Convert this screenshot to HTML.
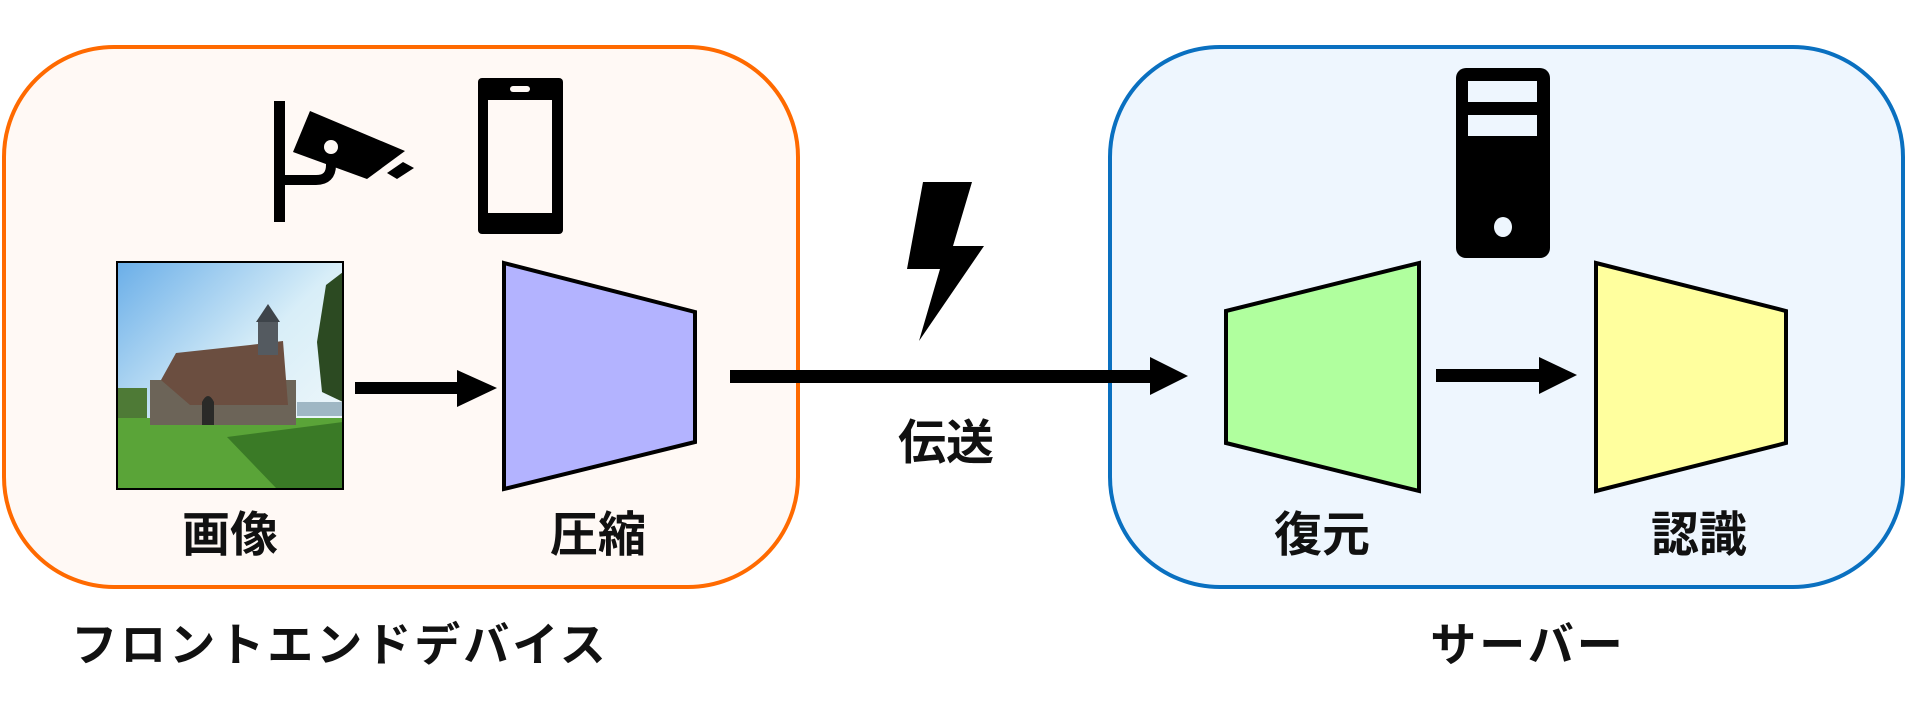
<!DOCTYPE html>
<html><head><meta charset="utf-8"><style>
html,body{margin:0;padding:0;background:#fff;}
body{width:1908px;height:710px;position:relative;overflow:hidden;font-family:"Liberation Sans","Noto Sans CJK JP",sans-serif;}
.t{position:absolute;font-weight:bold;color:#111;white-space:nowrap;transform:translate(-50%,-50%);line-height:1;}
</style></head><body>
<svg width="1908" height="710" style="position:absolute;left:0;top:0">
<rect x="4" y="47" width="794" height="540" rx="110" fill="#fff9f5" stroke="#ff6a00" stroke-width="4"/>
<rect x="1110" y="47" width="793" height="540" rx="110" fill="#eef6fe" stroke="#0a70c0" stroke-width="4"/>
<!-- camera -->
<rect x="274" y="101" width="11" height="121" fill="#000"/>
<path d="M285 180 H316 Q331 180 331 165 V150" fill="none" stroke="#000" stroke-width="10"/>
<polygon points="310,111 405,151 367,179 293,152" fill="#000"/>
<circle cx="331" cy="147" r="7" fill="#fff9f5"/>
<polygon points="387,173 403,162 414,168 397,179" fill="#000"/>
<!-- phone -->
<rect x="478" y="78" width="85" height="156" rx="4" fill="#000"/>
<rect x="488" y="100" width="64" height="113" fill="#fff9f5"/>
<rect x="510" y="86" width="20" height="6" rx="3" fill="#fff9f5"/>
<!-- photo -->
<g transform="translate(117,262)">
<defs><linearGradient id="sky" x1="0" y1="0" x2="1" y2="1"><stop offset="0" stop-color="#6aaee8"/><stop offset="0.5" stop-color="#d8eef8"/><stop offset="1" stop-color="#f6fafb"/></linearGradient></defs>
<rect x="0" y="0" width="226" height="227" fill="url(#sky)"/>
<rect x="0" y="126" width="30" height="36" fill="#4e7a36"/>
<rect x="180" y="140" width="46" height="14" fill="#9fb7c4"/>
<rect x="0" y="156" width="226" height="71" fill="#5aa438"/>
<polygon points="110,175 226,160 226,227 160,227" fill="#3a7a26"/>
<polygon points="209,23 226,10 226,140 205,130 200,80" fill="#2c4a22"/>
<rect x="33" y="118" width="146" height="45" fill="#6c6458"/>
<polygon points="44,118 59,91 133,83 166,79 171,143 73,143" fill="#6b4e40"/>
<rect x="141" y="58" width="20" height="35" fill="#545a60"/>
<polygon points="139,60 151,42 163,60" fill="#3e444a"/>
<path d="M85 163 V140 Q91 128 97 140 V163Z" fill="#2a2a28"/>
</g>
<rect x="117" y="262" width="226" height="227" fill="none" stroke="#000" stroke-width="2"/>
<!-- arrows -->
<rect x="355" y="382" width="104" height="12" fill="#000"/>
<polygon points="457,370 497,388 457,407" fill="#000"/>
<rect x="730" y="370" width="422" height="13" fill="#000"/>
<polygon points="1150,357 1188,376 1150,395" fill="#000"/>
<rect x="1436" y="369" width="105" height="13" fill="#000"/>
<polygon points="1539,357 1577,375 1539,394" fill="#000"/>
<!-- lightning -->
<polygon points="923,182 972,182 953,246 984,246 919,341 940,269 907,269" fill="#000"/>
<!-- trapezoids -->
<polygon points="504,263 695,312 695,442 504,489" fill="#b3b3ff" stroke="#000" stroke-width="4"/>
<polygon points="1226,311 1419,263 1419,491 1226,443" fill="#b0ff9e" stroke="#000" stroke-width="4"/>
<polygon points="1596,263 1786,311 1786,443 1596,491" fill="#ffff9e" stroke="#000" stroke-width="4"/>
<!-- server -->
<rect x="1456" y="68" width="94" height="190" rx="10" fill="#000"/>
<rect x="1468" y="81" width="69" height="21" fill="#eef6fe"/>
<rect x="1468" y="115" width="69" height="21" fill="#eef6fe"/>
<ellipse cx="1503" cy="227" rx="9" ry="10" fill="#eef6fe"/>
</svg>
<div class="t" style="left:230px;top:536px;font-size:48px">画像</div>
<div class="t" style="left:598px;top:536px;font-size:48px">圧縮</div>
<div class="t" style="left:946px;top:444px;font-size:48px">伝送</div>
<div class="t" style="left:1322px;top:536px;font-size:48px">復元</div>
<div class="t" style="left:1699px;top:536px;font-size:48px">認識</div>
<div class="t" style="left:340px;top:645px;font-size:46px;letter-spacing:3px">フロントエンドデバイス</div>
<div class="t" style="left:1528px;top:645px;font-size:46px;letter-spacing:3px">サーバー</div>
</body></html>
